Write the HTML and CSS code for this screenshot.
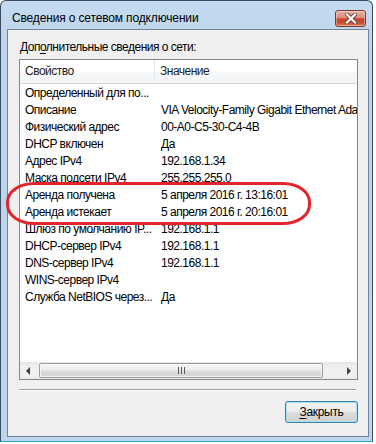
FILE: index.html
```html
<!DOCTYPE html>
<html lang="ru">
<head>
<meta charset="utf-8">
<title>Сведения о сетевом подключении</title>
<link rel="stylesheet" href="styles.css">
</head>
<body>
<div class="window">
  <div class="titlebar">
    <span class="title">Сведения о сетевом подключении</span>
    <button class="close" aria-label="Закрыть">
      <svg width="12" height="11" viewBox="0 0 12 11">
        <path d="M2 1.5 L10 9.5 M10 1.5 L2 9.5" stroke="#6b3b34" stroke-width="4" stroke-linecap="square" fill="none"/>
        <path d="M2 1.5 L10 9.5 M10 1.5 L2 9.5" stroke="#ffffff" stroke-width="2.2" stroke-linecap="square" fill="none"/>
      </svg>
    </button>
  </div>
  <div class="client">
    <div class="caption">Доп<u>о</u>лнительные сведения о сети:</div>
    <div class="list">
      <div class="header">
        <div class="hcell c1">Свойство</div>
        <div class="hcell c2">Значение</div>
      </div>
      <div class="rows">
        <div class="row"><span class="c1">Определенный для по...</span><span class="c2"></span></div>
        <div class="row"><span class="c1">Описание</span><span class="c2">VIA Velocity-Family Gigabit Ethernet Adapter</span></div>
        <div class="row"><span class="c1">Физический адрес</span><span class="c2">00-A0-C5-30-C4-4B</span></div>
        <div class="row"><span class="c1">DHCP включен</span><span class="c2">Да</span></div>
        <div class="row"><span class="c1">Адрес IPv4</span><span class="c2">192.168.1.34</span></div>
        <div class="row"><span class="c1">Маска подсети IPv4</span><span class="c2">255.255.255.0</span></div>
        <div class="row"><span class="c1">Аренда получена</span><span class="c2">5 апреля 2016 г. 13:16:01</span></div>
        <div class="row"><span class="c1">Аренда истекает</span><span class="c2">5 апреля 2016 г. 20:16:01</span></div>
        <div class="row"><span class="c1">Шлюз по умолчанию IP...</span><span class="c2">192.168.1.1</span></div>
        <div class="row"><span class="c1">DHCP-сервер IPv4</span><span class="c2">192.168.1.1</span></div>
        <div class="row"><span class="c1">DNS-сервер IPv4</span><span class="c2">192.168.1.1</span></div>
        <div class="row"><span class="c1">WINS-сервер IPv4</span><span class="c2"></span></div>
        <div class="row"><span class="c1">Служба NetBIOS через...</span><span class="c2">Да</span></div>
      </div>
      <div class="hscroll">
        <div class="arrow">
          <svg width="5" height="8" viewBox="0 0 5 8"><path d="M4 0 L0 4 L4 8 Z" fill="#404040"/></svg>
        </div>
        <div class="track">
          <div class="thumb">
            <svg width="7" height="7" viewBox="0 0 7 7"><path d="M0.5 0 V7 M3.5 0 V7 M6.5 0 V7" stroke="#5a5a5a" stroke-width="1"/></svg>
          </div>
        </div>
        <div class="arrow">
          <svg width="5" height="8" viewBox="0 0 5 8"><path d="M1 0 L5 4 L1 8 Z" fill="#404040"/></svg>
        </div>
      </div>
    </div>
    <div class="sep"></div>
    <div class="buttons">
      <button class="btn"><u>З</u>акрыть</button>
    </div>
  </div>
  <div class="annot"></div>
</div>
</body>
</html>
```

FILE: styles.css
```css
* { box-sizing: border-box; }
html, body { margin: 0; background: #ffffff; }
body {
  font-family: "Liberation Sans", Arial, sans-serif;
  font-size: 12px;
  letter-spacing: -0.5px;
  color: #000;
}

.window {
  position: relative;
  width: 373px;
  height: 442px;
  border: 1px solid #3a4c5e;
  border-bottom-color: #2ea6cc;
  border-radius: 6px 6px 0 0;
  background: linear-gradient(#c4daf0, #bcd4ec 60px, #bdd5ed);
  padding: 0 3px 4px 6px;
  display: flex;
  flex-direction: column;
}

.titlebar {
  height: 28px;
  display: flex;
  align-items: flex-start;
  justify-content: space-between;
  padding-left: 5px;
}
.title {
  margin-top: 10px;
  line-height: 15px;
  letter-spacing: -0.15px;
  color: #000;
}
.close {
  margin: 9px 3px 0 0;
  width: 31px;
  height: 17px;
  padding: 0;
  border: 1px solid #7b3a30;
  border-radius: 3px;
  background: linear-gradient(#eab1a4 0%, #dd8c7a 45%, #c8462c 52%, #c64a2e 75%, #dc7a52 100%);
  display: flex;
  align-items: center;
  justify-content: center;
  box-shadow: inset 0 0 0 1px rgba(255,255,255,0.35);
}

.client {
  flex: 1;
  background: #f0f0f0;
  border: 1px solid #6f849b;
  padding: 10px 10px 0 11px;
  display: flex;
  flex-direction: column;
}

.caption {
  line-height: 15px;
  padding-left: 1px;
}
.caption u { text-decoration-thickness: 1px; text-underline-offset: 2px; }

.list {
  margin-top: 4px;
  width: 339px;
  height: 321px;
  border: 1px solid #828790;
  background: #fff;
  display: flex;
  flex-direction: column;
  overflow: hidden;
}

.header {
  height: 24px;
  flex: none;
  display: flex;
  background: linear-gradient(#ffffff, #ffffff 50%, #f7f8f9 51%, #f3f4f6);
  border-bottom: 1px solid #d5d5d5;
}
.hcell {
  line-height: 23px;
  color: #1c1c1c;
  white-space: nowrap;
  overflow: hidden;
}
.hcell.c1 {
  width: 135px;
  padding-left: 5px;
  border-right: 1px solid #e3e6ea;
}
.hcell.c2 {
  flex: 1;
  padding-left: 5px;
}

.rows {
  flex: 1;
  padding-top: 1px;
}
.row {
  height: 17px;
  display: flex;
  line-height: 17px;
  white-space: nowrap;
}
.row .c1 {
  width: 135px;
  flex: none;
  padding-left: 5px;
  overflow: hidden;
}
.row .c2 {
  flex: 1;
  padding-left: 6px;
  overflow: hidden;
}

.hscroll {
  height: 17px;
  flex: none;
  display: flex;
  background: linear-gradient(#e4e4e4, #eeeeee 20%, #f1f1f1 80%, #e8e8e8);
}
.arrow {
  width: 17px;
  flex: none;
  display: flex;
  align-items: center;
  justify-content: center;
}
.track {
  flex: 1;
  padding: 1px 0 1px 2px;
  display: flex;
}
.thumb {
  width: 284px;
  height: 15px;
  border: 1px solid #9c9c9c;
  border-radius: 2px;
  background: linear-gradient(#f6f6f6, #ececec 45%, #dcdcdc 55%, #d4d4d4);
  box-shadow: inset 0 0 0 1px rgba(255,255,255,0.7);
  display: flex;
  align-items: center;
  justify-content: center;
}

.sep {
  margin-top: 9px;
  width: 337px;
  height: 2px;
  border-top: 1px solid #a0a0a0;
  border-bottom: 1px solid #ffffff;
}

.buttons {
  width: 339px;
  margin-top: 10px;
  display: flex;
  justify-content: flex-end;
}
.btn {
  width: 73px;
  height: 22px;
  padding: 0;
  font: inherit;
  letter-spacing: -0.3px;
  color: #000;
  border: 1px solid #3c7fb1;
  border-radius: 3px;
  background: linear-gradient(#f2f2f2 0%, #ebebeb 48%, #dddddd 52%, #cfcfcf 100%);
  box-shadow: inset 0 0 0 1px #a6e2f7;
}
.btn u { text-underline-offset: 2px; }

.annot {
  position: absolute;
  left: 5px;
  top: 181px;
  width: 305px;
  height: 43px;
  border: 3px solid #e2242c;
  border-radius: 28px / 20px;
  pointer-events: none;
}
```
